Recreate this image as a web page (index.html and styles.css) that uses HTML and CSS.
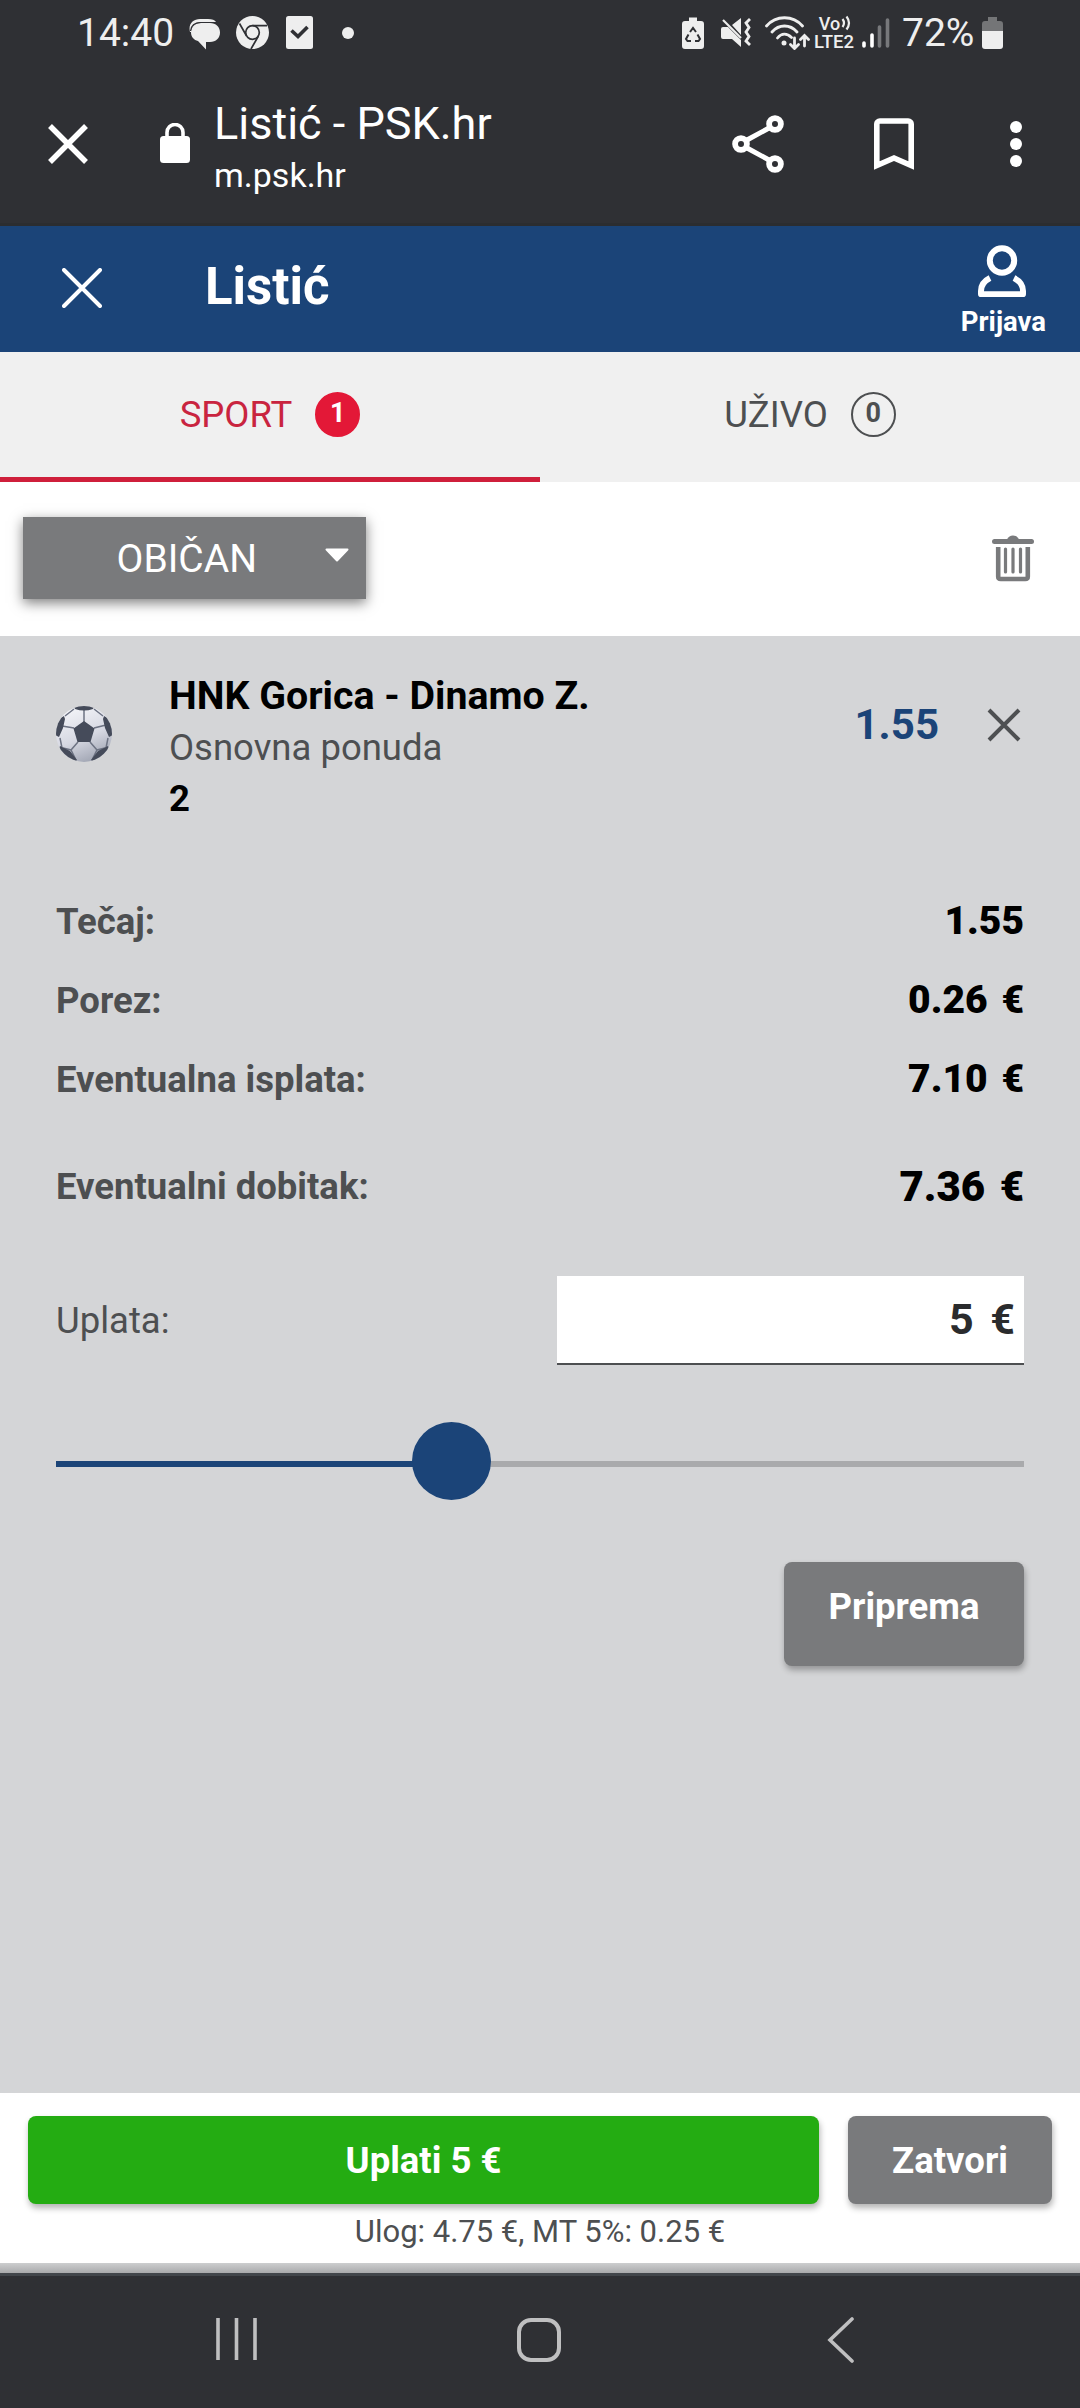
FILE: index.html
```html
<!DOCTYPE html>
<html lang="hr">
<head>
    <meta charset="UTF-8">
    <meta name="viewport" content="width=device-width, initial-scale=1.0">
    <title>Listić - PSK.hr</title>
    <link rel="stylesheet" href="styles.css">
</head>
<body>
    <div class="status-bar">
        <span class="clock">14:40</span>
        <svg class="icon-chat" width="32" height="32" viewBox="0 0 32 32">
            <path d="M1 14C-1 6 4 1 11 1h8c4 0 7 1 8 3H12C6 4 2 8 2 14z" fill="#eee"/>
            <path d="M12 5h9c6 0 10 4 10 9.500S27 24 21 24h-4v7.500L9 23c-4-1-7-4-7-8.500C2 9 6 5 12 5z" fill="#eee"/>
            <path d="M1.500 13C2 7.500 6 4.500 12 4.500h13" fill="none" stroke="#2f3034" stroke-width="1.200"/>
        </svg>
        <svg class="icon-chrome" width="33" height="33" viewBox="0 0 33 33">
            <circle cx="16.500" cy="16.500" r="16.500" fill="#eee"/>
            <g fill="none" stroke="#2f3034" stroke-width="1.700">
                <circle cx="16.500" cy="16.500" r="6.800"/>
                <path d="M16.500 9.700H31M10.600 20L3.500 7.500M22.400 20L15 33"/>
            </g>
        </svg>
        <svg class="icon-check" width="27" height="33" viewBox="0 0 27 33">
            <rect width="27" height="33" rx="2.500" fill="#eee"/>
            <path d="M5.500 14.500l6.500 6 9.500-9.500" fill="none" stroke="#2f3034" stroke-width="3.600"/>
        </svg>
        <span class="dot"></span>
        <div class="status-right">
            <svg width="22" height="33" viewBox="0 0 22 33">
                <path d="M7 1.500h8V5h4a3 3 0 0 1 3 3v22a3 3 0 0 1-3 3H3a3 3 0 0 1-3-3V8a3 3 0 0 1 3-3h4z" fill="#eee"/>
                <path d="M8 16l3-4 3 4M15.500 18.500l2.500 4.500-1.500 2H13M9 25H5.500L4 23l2.500-4.500" fill="none" stroke="#2f3034" stroke-width="2"/>
            </svg>
            <svg class="icon-mute" width="30" height="31" viewBox="0 0 30 31">
                <path d="M2 10h5l13 13v7l-9-8H2a2 2 0 0 1-2-2v-8a2 2 0 0 1 2-2zM20 1v17l-9-10z" fill="#eee"/>
                <path d="M2 3l18 18" stroke="#eee" stroke-width="2.200"/>
                <path d="M29 2l-4 4 3 4.500-3 4.500 3 4.500-3 4.500 4 4" fill="none" stroke="#eee" stroke-width="2.800"/>
            </svg>
            <svg class="icon-wifi" width="45" height="34" viewBox="0 0 45 34">
                <g fill="none" stroke="#eee" stroke-width="2.800" stroke-linecap="round">
                    <path d="M1.500 10C11-1 28-1 37.500 10M7 16c7-8 18-8 25 0M12.500 22c4-5 9.500-5 14-.5"/>
                    <path d="M29.500 22v10M25.500 28.500l4 4 4-4M39.500 30V20M35.500 23.500l4-4 4 4"/>
                </g>
                <circle cx="19" cy="27" r="2.500" fill="#eee"/>
            </svg>
            <div class="icon-lte">
                <div class="vo">Vo
                    <svg width="10" height="16" viewBox="0 0 10 16">
                        <path d="M1.500 4q3 4 0 8M5.500 1.500q5 6.500 0 13" fill="none" stroke="#eee" stroke-width="2.200"/>
                    </svg>
                </div>
                <div class="lte">LTE2</div>
            </div>
            <svg class="icon-signal" width="28" height="31" viewBox="0 0 28 31">
                <g stroke-width="3.600" stroke-linecap="round">
                    <path d="M2 26v3M10 18v11" stroke="#fff"/>
                    <path d="M17.500 10v19M25.500 3v26" stroke="#77787b"/>
                </g>
            </svg>
            <span class="percent">72%</span>
            <svg class="icon-battery" width="21" height="32" viewBox="0 0 21 32">
                <path d="M6 0h9v4h3a3 3 0 0 1 3 3v7H0V7a3 3 0 0 1 3-3h3z" fill="#747577"/>
                <path d="M0 14h21v15a3 3 0 0 1-3 3H3a3 3 0 0 1-3-3z" fill="#eee"/>
            </svg>
        </div>
    </div>

    <div class="browser-bar">
        <svg class="browser-close" width="40" height="40" viewBox="0 0 40 40">
            <path d="M2 2l36 36M38 2L2 38" stroke="#fff" stroke-width="5.500"/>
        </svg>
        <svg class="lock" width="30" height="40" viewBox="0 0 30 40">
            <rect y="13" width="30" height="27" rx="3.500" fill="#fff"/>
            <path d="M7 14V9.500a8 8 0 0 1 16 0V14" fill="none" stroke="#fff" stroke-width="3.600"/>
        </svg>
        <div class="page-info">
            <div class="page-title">Listić - PSK.hr</div>
            <div class="page-url">m.psk.hr</div>
        </div>
        <svg class="share" width="52" height="58" viewBox="0 0 52 58">
            <g fill="none" stroke="#fff" stroke-width="5.800">
                <path d="M15 25l22-12M15 33l22 12" stroke-width="5"/>
                <circle cx="43" cy="9" r="5.900"/>
                <circle cx="9" cy="29" r="5.900"/>
                <circle cx="43" cy="49" r="5.900"/>
            </g>
        </svg>
        <svg class="bookmark" width="40" height="52" viewBox="0 0 40 52">
            <path d="M2.800 47.500V6a3 3 0 0 1 3-3h28.400a3 3 0 0 1 3 3v41.500L20 40z" fill="none" stroke="#fff" stroke-width="5.600"/>
        </svg>
        <svg class="more" width="12" height="46" viewBox="0 0 12 46">
            <g fill="#fff">
                <circle cx="6" cy="6" r="6"/>
                <circle cx="6" cy="23" r="6"/>
                <circle cx="6" cy="40" r="6"/>
            </g>
        </svg>
    </div>

    <div class="header">
        <svg class="header-close" width="40" height="40" viewBox="0 0 40 40">
            <path d="M2 2l36 36M38 2L2 38" stroke="#fff" stroke-width="4" stroke-linecap="round"/>
        </svg>
        <h1>Listić</h1>
        <div class="login">
            <svg width="48" height="52" viewBox="0 0 48 52">
                <g fill="none" stroke="#fff" stroke-width="6">
                    <circle cx="24" cy="15.500" r="12.200"/>
                    <path d="M12 33C6 36 3 40 3 46v3.200h42V46c0-6-3-10-9-13" stroke-linejoin="round"/>
                </g>
            </svg>
            <span>Prijava</span>
        </div>
    </div>

    <div class="tabs">
        <div class="tab active">SPORT <span class="badge">1</span></div>
        <div class="tab">UŽIVO <span class="badge">0</span></div>
    </div>

    <div class="type-row">
        <button class="type-select">OBIČAN
            <svg class="caret" width="24" height="14" viewBox="0 0 24 14">
                <path d="M1.500 1.500h21L12 12.500z" fill="#fff" stroke="#fff" stroke-width="2" stroke-linejoin="round"/>
            </svg>
        </button>
        <svg class="trash" width="42" height="47" viewBox="0 0 42 47">
            <g fill="none" stroke="#797a7c" stroke-linecap="round">
                <path d="M2.500 6.500h37" stroke-width="5"/>
                <path d="M13.500 14v23M21 14v23M28.500 14v23" stroke-width="3.200"/>
                <path d="M6.200 12v29.500q0 2.500 2.500 2.500h24.600q2.500 0 2.500-2.500V12" stroke-width="4.600" stroke-linecap="butt"/>
            </g>
            <path d="M15 5c1-6 11-6 12 0z" fill="#797a7c"/>
        </svg>
    </div>

    <div class="ticket">
        <div class="match">
            <svg class="ball" width="56" height="56" viewBox="0 0 56 56">
                <defs>
                    <linearGradient id="ballShade" x1="0.300" y1="0" x2="0.700" y2="1">
                        <stop offset="0" stop-color="#f4f5f9"/>
                        <stop offset="0.550" stop-color="#d6d8e2"/>
                        <stop offset="1" stop-color="#9da2b0"/>
                    </linearGradient>
                    <clipPath id="ballClip"><circle cx="28" cy="28" r="28"/></clipPath>
                </defs>
                <circle cx="28" cy="28" r="28" fill="url(#ballShade)"/>
                <g clip-path="url(#ballClip)">
                    <path d="M28 16V4M38 22l12-3M34 36l7 8M22 36l-7 8M18 22L6 20M18 3L9 10M38 3l9 7M4 32l2 10M52 32l-2 10M20 54l-5-10-8-2M36 54l5-10 8-2" fill="none" stroke="#6d7383" stroke-width="1.500"/>
                    <path d="M28 15l10.500 7.500-4 13.500h-13l-4-13.500zM18 1q10-3 20 0l-1 2q-9 3-18 0zM8 10l1 3-2 9-4 9-4-2V15zM48 10l-1 3 2 9 4 9 4-2V15zM4 40l10 5 7 9-4 4L1 48zM52 40l-10 5-7 9 4 4 16-10z" fill="#454b5a"/>
                </g>
            </svg>
            <div class="match-info">
                <div class="teams">HNK Gorica - Dinamo Z.</div>
                <div class="market">Osnovna ponuda</div>
                <div class="pick">2</div>
            </div>
            <span class="odd">1.55</span>
            <svg class="remove" width="34" height="34" viewBox="0 0 34 34">
                <path d="M2 2l30 30M32 2L2 32" stroke="#4e5052" stroke-width="4"/>
            </svg>
        </div>

        <div class="row"><span>Tečaj:</span><b>1.55</b></div>
        <div class="row"><span>Porez:</span><b>0.26 €</b></div>
        <div class="row"><span>Eventualna isplata:</span><b>7.10 €</b></div>
        <div class="row win"><span>Eventualni dobitak:</span><b>7.36 €</b></div>

        <div class="stake">
            <span>Uplata:</span>
            <div class="stake-input">5 €</div>
        </div>

        <div class="slider">
            <div class="slider-fill"></div>
            <div class="slider-thumb"></div>
        </div>

        <button class="prepare">Priprema</button>
    </div>

    <div class="footer">
        <div class="footer-buttons">
            <button class="pay">Uplati 5 €</button>
            <button class="close">Zatvori</button>
        </div>
        <p>Ulog: 4.75 €, MT 5%: 0.25 €</p>
    </div>
    <div class="footer-edge"></div>

    <div class="nav-bar">
        <svg width="42" height="44" viewBox="0 0 42 44">
            <path d="M3 1v42M21.500 1v42M40 1v42" stroke="#bfbfc0" stroke-width="3.600"/>
        </svg>
        <svg class="nav-home" width="46" height="46" viewBox="0 0 46 46">
            <rect x="3" y="3" width="40" height="40" rx="12" fill="none" stroke="#bfbfc0" stroke-width="4"/>
        </svg>
        <svg width="28" height="46" viewBox="0 0 28 46">
            <path d="M25 2L3 23l22 21" fill="none" stroke="#bfbfc0" stroke-width="3.600" stroke-linecap="round"/>
        </svg>
    </div>
</body>
</html>
```

FILE: styles.css
```css
* {
    box-sizing: border-box;
}

body {
    margin: 0;
    width: 1080px;
    height: 2408px;
    display: flex;
    flex-direction: column;
    font-family: Roboto, "Liberation Sans", sans-serif;
    background-color: #d4d5d7;
    color: #4d4f51;
    overflow: hidden;
}

svg {
    display: block;
    flex-shrink: 0;
}

button {
    border: none;
    padding: 0;
    font-family: inherit;
    color: #fff;
    background-color: #797a7c;
}

/* phone status bar */
.status-bar {
    height: 65px;
    display: flex;
    align-items: center;
    padding: 0 77px 0 77px;
    background-color: #2f3034;
    color: #eee;
    font-size: 39px;
}

.clock {
    width: 112px;
}

.icon-chat {
    margin-top: 3px;
}

.icon-chrome {
    margin-left: 15px;
}

.icon-check {
    margin-left: 17px;
}

.dot {
    width: 12px;
    height: 12px;
    margin-left: 29px;
    border-radius: 50%;
    background-color: #eee;
}

.status-right {
    margin-left: auto;
    display: flex;
    align-items: center;
}

.icon-mute {
    margin-left: 17px;
}

.icon-wifi {
    margin-left: 14px;
}

.icon-lte {
    width: 42px;
    margin-left: 4px;
    font-size: 18px;
    font-weight: 500;
    line-height: 18px;
}

.vo {
    display: flex;
    justify-content: center;
    gap: 1px;
}

.lte {
    font-size: 18.500px;
    white-space: nowrap;
}

.icon-signal {
    margin-left: 6px;
}

.percent {
    width: 80px;
    margin-left: 12px;
    white-space: nowrap;
}

/* browser toolbar */
.browser-bar {
    height: 161px;
    display: flex;
    align-items: flex-start;
    padding: 0 58px 0 48px;
    background-color: #2f3034;
    color: #fff;
    border-bottom: 3px solid #2b2d30;
}

.browser-close {
    margin-top: 59px;
}

.lock {
    margin: 58px 24px 0 72px;
}

.page-info {
    flex: 1;
    padding-top: 31px;
}

.page-title {
    font-size: 45px;
    line-height: 56px;
}

.page-url {
    font-size: 34px;
    line-height: 46px;
}

.share {
    margin-top: 50px;
}

.bookmark {
    margin: 53px 96px 0 90px;
}

.more {
    margin-top: 56px;
}

/* site header */
.header {
    height: 126px;
    display: flex;
    align-items: center;
    padding: 0 34px 0 62px;
    background-color: #1b4478;
    color: #fff;
}

.header-close {
    margin-bottom: 2px;
}

.header h1 {
    flex: 1;
    margin: 0 0 5px 103px;
    font-size: 51px;
    line-height: 58px;
}

.login {
    display: flex;
    flex-direction: column;
    align-items: center;
    padding-top: 5px;
    font-size: 27.500px;
    font-weight: 700;
    line-height: 32px;
}

.login svg {
    margin: 0 2px 9px 0;
}

.tabs {
    height: 130px;
    display: flex;
    background-color: #f0f0f0;
}

.tab {
    flex: 1;
    display: flex;
    justify-content: center;
    padding-top: 40px;
    font-size: 36.500px;
    line-height: 46px;
}

.tab.active {
    color: #c9243f;
    border-bottom: 5px solid #cf1f3b;
}

.badge {
    width: 45px;
    height: 45px;
    margin-left: 23px;
    border: 2px solid #4d4f51;
    border-radius: 50%;
    font-size: 27px;
    font-weight: 700;
    line-height: 38px;
    text-align: center;
}

.active .badge {
    color: #fff;
    border-color: #e31837;
    background-color: #e31837;
}

.type-row {
    height: 154px;
    display: flex;
    align-items: flex-start;
    justify-content: space-between;
    padding: 35px 46px 0 23px;
    background-color: #fff;
}

.type-select {
    width: 343px;
    height: 82px;
    display: flex;
    align-items: center;
    justify-content: flex-end;
    padding: 1px 17px 0 0;
    font-size: 39px;
    box-shadow: 0 4px 12px rgba(0, 0, 0, 0.5);
}

.caret {
    margin: 0 0 8px 68px;
}

.trash {
    margin-top: 18px;
}

/* ticket */
.ticket {
    flex: 1;
    display: flex;
    flex-direction: column;
    padding: 34px 56px 0;
}

.match {
    display: flex;
    height: 224px;
    color: #000;
}

.ball {
    margin: 36px 57px 0 0;
}

.match-info {
    flex: 1;
    padding-top: 1px;
    font-size: 36.500px;
    line-height: 51px;
}

.teams {
    font-size: 39.300px;
    font-weight: 700;
}

.market {
    color: #4d4f51;
}

.pick {
    font-weight: 700;
}

.odd {
    padding-top: 30px;
    font-size: 42px;
    font-weight: 700;
    line-height: 50px;
    color: #1b4478;
}

.remove {
    margin: 38px 3px 0 48px;
}

.row {
    display: flex;
    justify-content: space-between;
    height: 79px;
    font-size: 36.500px;
    font-weight: 700;
    line-height: 55px;
}

.row b {
    font-size: 39px;
    word-spacing: 4px;
    color: #000;
}

.row.win {
    margin-top: 28px;
}

.row.win b {
    font-size: 42px;
}

.stake {
    display: flex;
    align-items: center;
    justify-content: space-between;
    margin-top: 38px;
    font-size: 36.500px;
}

.stake-input {
    width: 467px;
    height: 89px;
    padding-right: 9px;
    border-bottom: 2px solid #4d4f51;
    background-color: #fff;
    color: #2a2b2d;
    font-size: 43px;
    font-weight: 700;
    line-height: 87px;
    text-align: right;
    word-spacing: 6px;
}

.slider {
    position: relative;
    height: 6px;
    margin: 96px 0 95px;
    background-color: #a9aaac;
}

.slider-fill {
    width: 40.800%;
    height: 6px;
    background-color: #1b4478;
}

.slider-thumb {
    position: absolute;
    left: 356px;
    top: -39px;
    width: 79px;
    height: 78px;
    border-radius: 50%;
    background-color: #1b4478;
}

.prepare,
.pay,
.close {
    border-radius: 8px;
    font-size: 36.500px;
    font-weight: 700;
    box-shadow: 1px 4px 6px rgba(0, 0, 0, 0.3);
}

.prepare {
    align-self: flex-end;
    width: 240px;
    height: 104px;
    padding-bottom: 16px;
}

.footer {
    height: 170px;
    padding: 23px 28px 0;
    background-color: #fff;
}

.footer-buttons {
    display: flex;
    gap: 29px;
    height: 88px;
}

.pay {
    flex: 1;
    background-color: #24ac12;
}

.close {
    width: 204px;
}

.footer p {
    margin: 8px 0 0;
    font-size: 31px;
    line-height: 40px;
    text-align: center;
}

.footer-edge {
    height: 10px;
    background: linear-gradient(#cdcecf, #a9aaac);
}

.nav-bar {
    height: 135px;
    display: flex;
    justify-content: space-between;
    padding: 41px 225px 0 215px;
    border-top: 3px solid #42464b;
    background-color: #2f3034;
}

.nav-home {
    margin-right: 7px;
}
```
